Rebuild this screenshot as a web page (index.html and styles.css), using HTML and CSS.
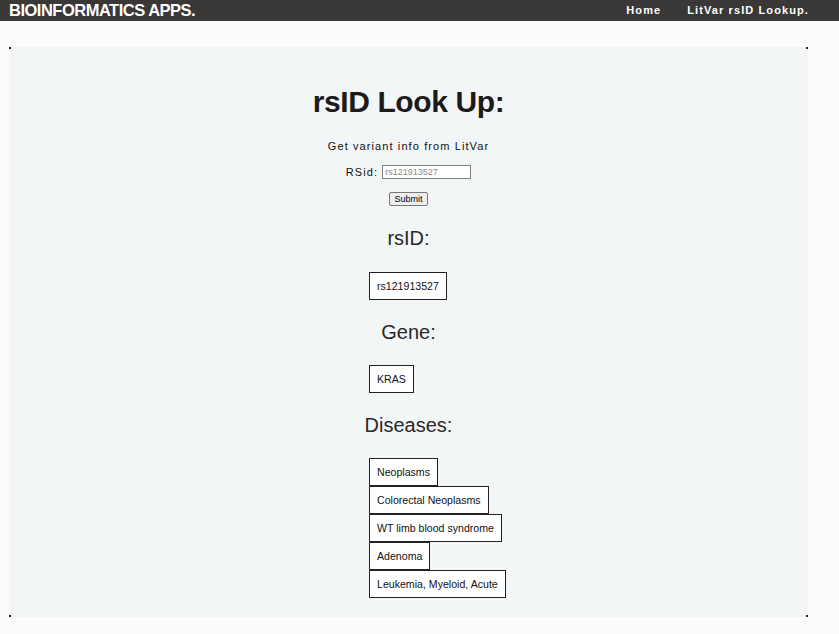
FILE: index.html
```html
<!DOCTYPE html>
<html lang="en">
<head>
<meta charset="utf-8">
<title>rsID Look Up</title>
<link rel="stylesheet" href="styles.css">
</head>
<body>
<header class="topbar">
  <div class="brand">BIOINFORMATICS APPS.</div>
  <nav class="nav">
    <a class="nav-link" href="#">Home</a>
    <a class="nav-link" href="#">LitVar rsID Lookup.</a>
  </nav>
</header>
<main class="panel">
  <h1 class="title">rsID Look Up:</h1>
  <p class="subtitle">Get variant info from LitVar</p>
  <form class="lookup">
    <div class="field">
      <label class="label" for="rsid">RSid:</label>
      <input class="input" id="rsid" type="text" placeholder="rs121913527">
    </div>
    <button class="submit" type="button">Submit</button>
  </form>
  <h2 class="section-title">rsID:</h2>
  <div class="boxes boxes-first"><div class="box">rs121913527</div></div>
  <h2 class="section-title">Gene:</h2>
  <div class="boxes"><div class="box">KRAS</div></div>
  <h2 class="section-title">Diseases:</h2>
  <div class="boxes">
    <div class="box">Neoplasms</div>
    <div class="box">Colorectal Neoplasms</div>
    <div class="box">WT limb blood syndrome</div>
    <div class="box">Adenoma</div>
    <div class="box">Leukemia, Myeloid, Acute</div>
  </div>
</main>
</body>
</html>
```
FILE: styles.css
```css
* { box-sizing: border-box; }
html, body { margin: 0; padding: 0; }
body {
  background: #fcfcfc;
  font-family: "Liberation Sans", Arial, sans-serif;
  color: #111;
  width: 839px;
  height: 634px;
  overflow: hidden;
}
.topbar {
  height: 21px;
  background: #3a3737;
  display: flex;
  align-items: center;
  justify-content: space-between;
  padding: 0 30px 0 9px;
}
.brand {
  color: #fff;
  font-weight: bold;
  font-size: 16.5px;
  letter-spacing: -0.5px;
  line-height: 21px;
}
.nav { display: flex; gap: 26px; }
.nav-link {
  color: #fff;
  text-decoration: none;
  font-weight: bold;
  font-size: 11px;
  letter-spacing: 1.1px;
  line-height: 21px;
}
.panel {
  margin: 26px 0 0 9px;
  width: 799px;
  height: 570px;
  background-color: #f3f6f7;
  background-image:
    linear-gradient(#222, #222), linear-gradient(#222, #222),
    linear-gradient(#222, #222), linear-gradient(#222, #222);
  background-size: 2px 2px;
  background-position: left top, right top, left bottom, right bottom;
  background-repeat: no-repeat;
  padding-top: 37px;
  display: flex;
  flex-direction: column;
  align-items: center;
}
.title {
  margin: 0;
  font-size: 30px;
  line-height: 36px;
  font-weight: bold;
  letter-spacing: -0.4px;
  color: #1c1a1a;
}
.subtitle {
  margin: 19px 0 0;
  font-size: 11px;
  line-height: 14px;
  letter-spacing: 1.1px;
  color: #111;
}
.lookup {
  margin: 12px 0 0;
  display: flex;
  flex-direction: column;
  align-items: center;
}
.field {
  display: flex;
  align-items: center;
  gap: 4px;
  height: 14px;
}
.label {
  font-size: 11px;
  line-height: 14px;
  letter-spacing: 1.1px;
  color: #111;
}
.input {
  width: 89px;
  height: 14px;
  margin: 0;
  padding: 0 2px;
  border: 1px solid #808080;
  background: #fff;
  font-family: "Liberation Sans", Arial, sans-serif;
  font-size: 9px;
  color: #333;
}
.input::placeholder { color: #8a8a8a; }
.submit {
  margin-top: 13px;
  width: 39px;
  height: 14px;
  padding: 0;
  border: 1px solid #767676;
  border-radius: 2px;
  background: #efefef;
  font-family: "Liberation Sans", Arial, sans-serif;
  font-size: 9px;
  line-height: 12px;
  color: #000;
}
.section-title {
  margin: 20px 0 0;
  font-size: 20px;
  line-height: 24px;
  font-weight: normal;
  color: #2a2828;
}
.boxes {
  margin-top: 21px;
  width: 79px;
  display: flex;
  flex-direction: column;
  align-items: flex-start;
}
.boxes-first { margin-top: 22px; }
.box {
  white-space: nowrap;
  border: 1px solid #222;
  background: #fff;
  padding: 7px 7px;
  font-size: 10.6px;
  line-height: 12px;
  color: #111;
}
```
